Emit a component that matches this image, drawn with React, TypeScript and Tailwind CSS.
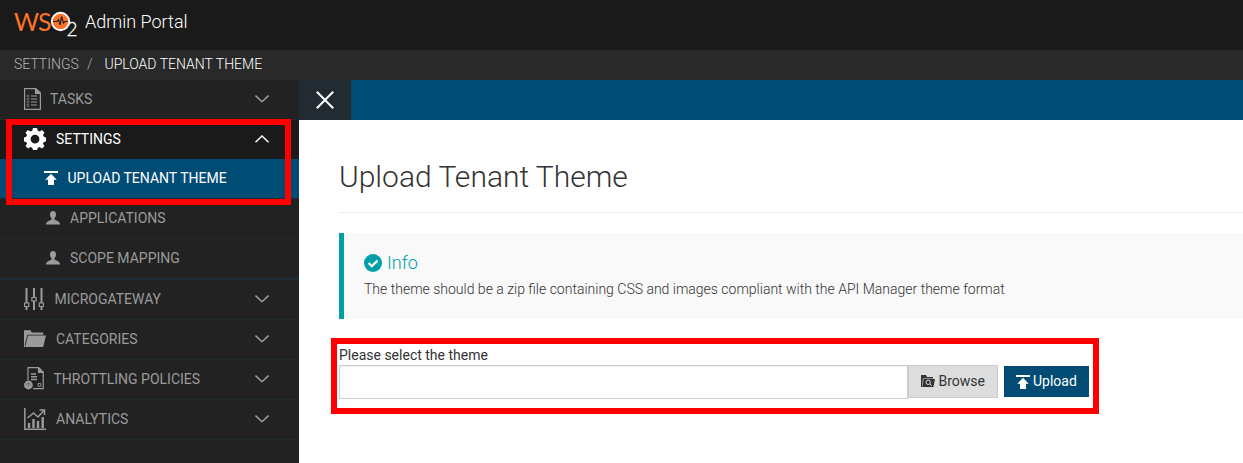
import React from "react";

type IconProps = { className?: string };

const Logo = () => (
  <svg className="-ml-1 -mt-2 shrink-0" width="72" height="40" viewBox="10 2 72 40" role="img">
    <g fill="#ff7328" fontFamily="Lato" fontSize="25.5" fontWeight="400">
      <text x="14" y="30.7" textLength="25" lengthAdjust="spacingAndGlyphs">W</text>
      <text x="38" y="30.7" textLength="13.5" lengthAdjust="spacingAndGlyphs">S</text>
    </g>
    <circle cx="60.5" cy="21.5" r="8.7" fill="#ff7328" stroke="#fff" strokeWidth="1.9" />
    <path d="M53 21.5h4l1.5-2 1.7 5.5 1.3-8.5 2 6.5 1.300-1.500H68" fill="none" stroke="#222" strokeWidth="1.2" />
    <text x="66.500" y="36" fill="#fff" fontFamily="Lato" fontSize="20.500" fontWeight="300" stroke="#fff" strokeWidth="0.3" textLength="11" lengthAdjust="spacingAndGlyphs">2</text>
  </svg>
);

const TasksIcon = () => (
  <svg width="17" height="22" viewBox="0 0 17 22" fill="none" stroke="currentColor" strokeWidth="1.2">
    <path d="M.6.6h11l4.8 4.5v16.3H.6z" />
    <path d="M11.5.6v4.7h4.9z" fill="currentColor" />
    <path d="M7 8h6M7 11h6M7 14h6M7 17h6" />
    <path d="M3 7h2v2H3zM3 10.5h2v1.5H3zM3 13.5h2V15H3zM3 16.5h2v2H3z" strokeWidth=".5" />
  </svg>
);

const GearIcon = () => (
  <svg width="22" height="22" viewBox="0 0 22 22" fill="currentColor">
    <path
      fillRule="evenodd"
      d="M9 0h4l.7 2.600 1.800.8L18 2l2.500 2.500-1.500 2.600.8 1.700 2.200.6v4l-2.200.6-.8 1.800 1.500 2.500L18 20.500l-2.500-1.400-1.800.8L13 22H9l-.7-2.100-1.800-.8L4 20.500 1.500 18 3 15.800 2.200 14 0 13.400v-4l2.200-.6L3 7.100 1.500 4.500 4 2l2.500 1.400 1.800-.8zM11 6.700a4.400 4.400 0 1 0 0 8.800 4.400 4.400 0 0 0 0-8.800z"
    />
  </svg>
);

const UploadIcon = ({ className }: IconProps) => (
  <svg className={className} width="14" height="14" viewBox="0 0 14 14" fill="currentColor">
    <path d="M0 0h14v2H0zM7 2.700l5.800 6H10V14H4V8.700H1.200z" />
  </svg>
);

const UserIcon = () => (
  <svg width="14" height="14" viewBox="0 0 14 14" fill="currentColor">
    <path d="M7 0c2 0 3 1.400 3 3.300 0 1.700-.6 3.200-1.500 4.100v1.400c1.700.8 5.500 1.400 5.500 4.600H0c0-3.200 3.800-3.800 5.500-4.600V7.400C4.600 6.500 4 5 4 3.300 4 1.400 5 0 7 0z" />
  </svg>
);

const SlidersIcon = () => (
  <svg width="20" height="22" viewBox="0 0 20 22" fill="none" stroke="currentColor">
    <path d="M2.500 0v15M2.500 19v3M10 0v9M10 13v9M17.500 0v15M17.500 19v3" strokeWidth="2" />
    <path d="M.6 15h4.200v3.500H.6zM7.900 9.500h4.200V13H7.900zM15.200 15h4.200v3.500h-4.200z" strokeWidth="1.200" />
  </svg>
);

const FolderIcon = () => (
  <svg width="22" height="17" viewBox="0 0 22 17" fill="currentColor">
    <path d="M0 .300h6.500l1.300 2.200h11.400v2.200H3.400L.9 14.500 1.400 17H0z" />
    <path d="M4 5.500h18L19.200 17H1.200z" />
  </svg>
);

const PolicyIcon = () => (
  <svg width="20" height="23" viewBox="0 0 20 23" fill="none" stroke="currentColor" strokeWidth="1.200">
    <path d="M4 13V.700h10.500l4.700 4.500v16.500H9" />
    <path d="M14.500.700v4.700h4.700z" fill="currentColor" />
    <path d="M7 7h5M7 9.800h6M7 12.600h6" strokeWidth="1.500" />
    <path d="M14 16.500h2.800v2.800H14z" strokeWidth=".900" />
    <circle cx="4.400" cy="18" r="4.400" fill="currentColor" stroke="none" />
    <path d="M2 18.300c0-2.600 4.800-2.600 4.800 0M4.400 16v3.500" stroke="#222" strokeWidth=".35" />
  </svg>
);

const ChartIcon = () => (
  <svg width="22" height="22" viewBox="0 0 22 22" fill="none" stroke="currentColor">
    <path d="M.8 0v21.200H22" strokeWidth="1.500" />
    <path d="M5 20v-5M9.500 20v-9M14 20v-7M18.700 20V9" strokeWidth="2.400" />
    <path d="M3.500 10l6-5 4.500 4 5.500-6M15.500 2h5v5" strokeWidth="1.500" />
  </svg>
);

const Chevron = ({ up }: { up?: boolean }) => (
  <svg className="ml-auto mr-[30px]" width="14" height="8" viewBox="0 0 14 8" fill="none" stroke="currentColor" strokeWidth="1.500">
    <path d={up ? "M.5 7.200L7 1l6.500 6.200" : "M.5.600L7 6.800 13.500.600"} />
  </svg>
);

type RowProps = { icon: React.ReactNode; label: string; slot: string };

const NavRow = ({ icon, label, slot }: RowProps) => (
  <li className="flex h-10 items-center border-b border-[#202c33] pb-[2px] pl-6 text-[#9b9b9b]">
    <span className={slot}>{icon}</span>
    <span>{label}</span>
    <Chevron />
  </li>
);

const SubRow = ({ label }: { label: string }) => (
  <li className="flex h-10 items-center border-b border-[#202c33] pb-[2px] pl-[46px] text-[#9b9b9b]">
    <span className="w-6"><UserIcon /></span>
    <span>{label}</span>
  </li>
);

export default function App() {
  return (
    <div className="relative flex h-[463px] w-[1243px] flex-col overflow-hidden bg-white font-['Roboto',sans-serif] text-sm text-[#333]">
      <header className="flex h-[50px] shrink-0 items-start bg-[#1a1a1a] pl-[14px] pt-[10px] text-white">
        <Logo />
        <span className="ml-[3px] text-[18px] font-light leading-6">Admin Portal</span>
      </header>
      <nav className="flex h-[30px] shrink-0 items-center bg-[#292929] pl-[14px] pb-[2px] font-light text-white">
        <span className="w-[73px] text-[#b5b5b5]">SETTINGS</span>
        <span className="w-[17.5px] text-[#b5b5b5]">/</span>
        <span>UPLOAD TENANT THEME</span>
      </nav>
      <div className="flex min-h-0 flex-1">
        <aside className="w-[299px] shrink-0 bg-[#222]">
          <ul>
            <NavRow icon={<TasksIcon />} label="TASKS" slot="w-[26px]" />
            <li className="flex h-[39px] items-center bg-[#1a1a1a] pb-px pl-6 text-white">
              <span className="w-8"><GearIcon /></span>
              <span>SETTINGS</span>
              <Chevron up />
            </li>
            <li className="flex h-10 items-center border-b border-[#202c33] bg-[#004c74] pb-[2px] pl-11 text-white">
              <span className="w-[23.5px]"><UploadIcon /></span>
              <span>UPLOAD TENANT THEME</span>
            </li>
            <SubRow label="APPLICATIONS" />
            <SubRow label="SCOPE MAPPING" />
            <li className="h-px bg-[#202c33]" />
            <NavRow icon={<SlidersIcon />} label="MICROGATEWAY" slot="w-[30.5px]" />
            <NavRow icon={<FolderIcon />} label="CATEGORIES" slot="w-8" />
            <NavRow icon={<PolicyIcon />} label="THROTTLING POLICIES" slot="w-[29.5px]" />
            <NavRow icon={<ChartIcon />} label="ANALYTICS" slot="w-8" />
          </ul>
        </aside>
        <main className="min-w-0 flex-1">
          <div className="flex h-10 bg-[#004c74]">
            <button className="flex w-[52px] items-center justify-center bg-[#222b32] text-white" aria-label="Close">
              <svg width="18" height="18" viewBox="0 0 18 18" stroke="currentColor" strokeWidth="2">
                <path d="M.8.800l16.400 16.400M17.200.800L.8 17.200" />
              </svg>
            </button>
          </div>
          <div className="pl-10">
            <h1 className="h-[93px] border-b border-[#eee] pt-[37px] text-[30px] font-light leading-10">Upload Tenant Theme</h1>
            <section className="mt-5 h-[86px] border-l-[5px] border-[#00a0a8] bg-[#f9f9f9] pl-5 pt-5">
              <h2 className="flex h-5 items-center text-[18px] font-light text-[#00a0a8]">
                <svg className="mr-[5px]" width="18" height="18" viewBox="0 0 18 18">
                  <circle cx="9" cy="9" r="9" fill="#00a0a8" />
                  <path d="M4.600 9l3.200 3.200 5.800-5.600" fill="none" stroke="#fff" strokeWidth="2.300" />
                </svg>
                Info
              </h2>
              <p className="mt-[6px] font-light leading-5">The theme should be a zip file containing CSS and images compliant with the API Manager theme format</p>
            </section>
            <form className="mt-[26px]">
              <label className="block h-5 leading-5">Please select the theme</label>
              <div className="flex items-start">
                <input className="h-[34px] w-[569px] border border-[#ccc] bg-white shadow-[inset_0_1px_1px_rgba(0,0,0,0.07)]" />
                <button type="button" className="flex h-[33px] w-[90px] items-center border border-[#ccc] bg-[#ddd] pb-px pl-3">
                  <svg className="mr-[3.500px]" width="14" height="12" viewBox="0 0 14 12">
                    <path d="M0 0h5l1 2h6v1.500H2L1 10V12H0zM2.600 4H14l-1.500 8H1.200z" fill="#333" />
                    <circle cx="7.200" cy="7.300" r="2.200" fill="none" stroke="#ddd" />
                    <path d="M8.800 8.900l2 2" stroke="#ddd" />
                  </svg>
                  Browse
                </button>
                <button type="button" className="ml-[6px] mt-px flex h-[31px] w-[85px] items-center bg-[#004c74] pl-3 text-white">
                  <UploadIcon className="mr-[3px]" />
                  <span className="pb-px">Upload</span>
                </button>
              </div>
            </form>
          </div>
        </main>
      </div>
      <div className="pointer-events-none absolute left-[6px] top-[119px] h-[86px] w-[285px] border-6 border-[#f00]" />
      <div className="pointer-events-none absolute left-[331px] top-[338px] h-[76px] w-[768px] border-6 border-[#f00]" />
    </div>
  );
}
